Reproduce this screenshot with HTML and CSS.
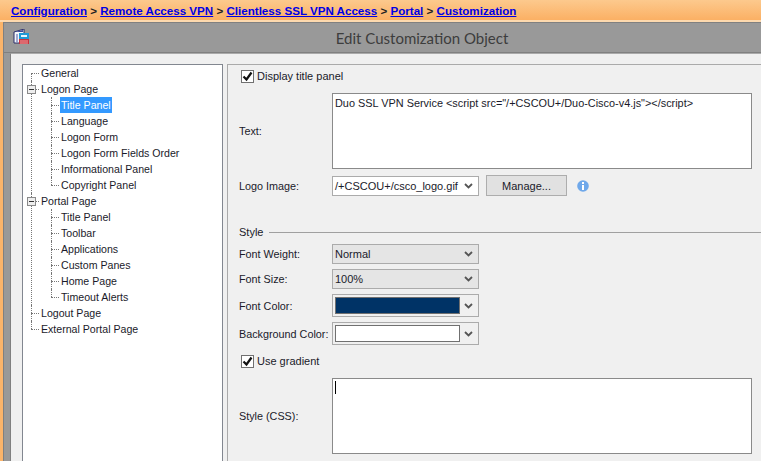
FILE: index.html
```html
<!DOCTYPE html>
<html lang="en">
<head>
    <meta charset="UTF-8">
    <title>Edit Customization Object</title>
    <link rel="stylesheet" href="styles.css">
</head>
<body>
    <div class="crumbs">
        <a href="#">Configuration</a> &gt; <a href="#">Remote Access VPN</a> &gt; <a href="#">Clientless SSL VPN Access</a> &gt; <a href="#">Portal</a> &gt; <a href="#">Customization</a>
    </div>
    <div class="window">
        <div class="titlebar">
            <svg class="winicon" width="16" height="16" viewBox="0 0 16 16">
                <path d="M1 3l10-3v14H1z" fill="#f4f6fb" stroke="#2b2f6b"/>
                <path d="M2 3l8-2v2H2z" fill="#3a4a9a"/>
                <path d="M3 6h2M3 8h2M3 10h2M3 12h2" stroke="#4a5aa8"/>
                <rect x="6" y="4" width="10" height="6" fill="#1f9ad6"/>
                <rect x="8" y="6" width="6" height="2" fill="#e8f6ff"/>
                <rect x="6" y="10" width="10" height="5" fill="#c8323c"/>
                <path d="M7 12h8M7 14h8" stroke="#f0a0a0"/>
            </svg>
            <span class="wintitle">Edit Customization Object</span>
        </div>
        <div class="content">
            <ul class="tree">
                <li><span class="node">General</span></li>
                <li class="open">
                    <span class="minus"></span><span class="node">Logon Page</span>
                    <ul>
                        <li><span class="node selected">Title Panel</span></li>
                        <li><span class="node">Language</span></li>
                        <li><span class="node">Logon Form</span></li>
                        <li><span class="node">Logon Form Fields Order</span></li>
                        <li><span class="node">Informational Panel</span></li>
                        <li><span class="node">Copyright Panel</span></li>
                    </ul>
                </li>
                <li class="open">
                    <span class="minus"></span><span class="node">Portal Page</span>
                    <ul>
                        <li><span class="node">Title Panel</span></li>
                        <li><span class="node">Toolbar</span></li>
                        <li><span class="node">Applications</span></li>
                        <li><span class="node">Custom Panes</span></li>
                        <li><span class="node">Home Page</span></li>
                        <li><span class="node">Timeout Alerts</span></li>
                    </ul>
                </li>
                <li><span class="node">Logout Page</span></li>
                <li><span class="node">External Portal Page</span></li>
            </ul>
            <div class="form">
                <div class="checkrow first">
                    <span class="checkbox"><svg width="11" height="11" viewBox="0 0 11 11"><path d="M1.500 5.500l3 3 5-7" fill="none" stroke="#111" stroke-width="2.200"/></svg></span>
                    <span>Display title panel</span>
                </div>
                <div class="field text-field">
                    <label>Text:</label>
                    <div class="textbox tall">Duo SSL VPN Service &lt;script src="/+CSCOU+/Duo-Cisco-v4.js"&gt;&lt;/script&gt;</div>
                </div>
                <div class="field logo-field">
                    <label>Logo Image:</label>
                    <div class="select white">
                        <span class="value">/+CSCOU+/csco_logo.gif</span>
                        <svg class="chev" width="9" height="6" viewBox="0 0 9 6"><path d="M1 1l3.500 3.500L8 1" fill="none" stroke="#555" stroke-width="1.800"/></svg>
                    </div>
                    <button class="btn">Manage...</button>
                    <svg class="info" width="12" height="12" viewBox="0 0 12 12">
                        <circle cx="6" cy="6" r="5.800" fill="#6fa8ea"/>
                        <rect x="5" y="2" width="2" height="2" fill="#fff"/>
                        <rect x="5" y="5" width="2" height="5" fill="#fff"/>
                    </svg>
                </div>
                <div class="section">
                    <span>Style</span>
                    <span class="rule"></span>
                </div>
                <div class="field weight-field">
                    <label>Font Weight:</label>
                    <div class="select">
                        <span class="value">Normal</span>
                        <svg class="chev" width="9" height="6" viewBox="0 0 9 6"><path d="M1 1l3.500 3.500L8 1" fill="none" stroke="#555" stroke-width="1.800"/></svg>
                    </div>
                </div>
                <div class="field size-field">
                    <label>Font Size:</label>
                    <div class="select">
                        <span class="value">100%</span>
                        <svg class="chev" width="9" height="6" viewBox="0 0 9 6"><path d="M1 1l3.500 3.500L8 1" fill="none" stroke="#555" stroke-width="1.800"/></svg>
                    </div>
                </div>
                <div class="field color-field">
                    <label>Font Color:</label>
                    <div class="select colorpick">
                        <span class="swatch navy"></span>
                        <svg class="chev" width="9" height="6" viewBox="0 0 9 6"><path d="M1 1l3.500 3.500L8 1" fill="none" stroke="#555" stroke-width="1.800"/></svg>
                    </div>
                </div>
                <div class="field color-field">
                    <label>Background Color:</label>
                    <div class="select colorpick">
                        <span class="swatch"></span>
                        <svg class="chev" width="9" height="6" viewBox="0 0 9 6"><path d="M1 1l3.500 3.500L8 1" fill="none" stroke="#555" stroke-width="1.800"/></svg>
                    </div>
                </div>
                <div class="checkrow second">
                    <span class="checkbox"><svg width="11" height="11" viewBox="0 0 11 11"><path d="M1.500 5.500l3 3 5-7" fill="none" stroke="#111" stroke-width="2.200"/></svg></span>
                    <span>Use gradient</span>
                </div>
                <div class="field css-field">
                    <label>Style (CSS):</label>
                    <div class="textbox tall"><span class="caret"></span></div>
                </div>
            </div>
        </div>
    </div>
</body>
</html>
```

FILE: styles.css
```css
*{
    margin: 0;
    padding: 0;
    box-sizing: border-box;
    font-family: "Liberation Sans", Arial, sans-serif;
}

html, body{
    height: 100%;
    overflow: hidden;
}

body{
    background-color: #fbb46a;
    font-size: 11px;
    color: #1a1a2a;
}

.crumbs{
    height: 22px;
    padding: 3px 0 0 11px;
    background-image: linear-gradient(#fcc98d, #fbb064);
    border-bottom: 2px solid #fdd9ae;
    font-size: 11.6px;
    font-weight: bold;
    line-height: 15px;
    color: #222;
}
.crumbs a{
    color: #0000e6;
}

.window{
    margin-left: 3px;
    height: 439px;
    background-color: #999;
    border-top: 1px solid #808080;
    border-left: 1px solid #808080;
    display: flex;
    flex-direction: column;
}

.titlebar{
    height: 30px;
    flex-shrink: 0;
    display: flex;
    align-items: center;
    justify-content: center;
    border-bottom: 1px solid #808080;
    position: relative;
}
.wintitle{
    font-family: Lato, sans-serif;
    font-size: 15px;
    color: #3d3d3d;
    margin-left: 79px;
}
.winicon{
    position: absolute;
    left: 9px;
    top: 6px;
}

.content{
    flex: 1;
    margin-left: 6px;
    background-color: #f0f0f0;
    border-left: 1px solid #808080;
    border-top: 1px solid #aaa;
    padding: 10px 0 0 11px;
    display: flex;
}

.tree{
    width: 201px;
    height: 400px;
    flex-shrink: 0;
    background-color: #fff;
    border: 1px solid #828790;
    border-bottom: 0;
    list-style: none;
    padding-left: 17px;
    font-size: 10.6px;
}
.tree ul{
    list-style: none;
    padding-left: 20px;
}
.tree li{
    position: relative;
}
.node{
    display: inline-block;
    height: 16px;
    line-height: 16px;
    padding: 0 1px;
    vertical-align: top;
}
.selected{
    background-color: #3399ff;
    color: #fff;
}

/* dotted tree connectors */
.tree li::before{
    content: "";
    position: absolute;
    left: -9px;
    top: 8px;
    width: 8px;
    border-top: 1px dotted #777;
}
.tree li::after{
    content: "";
    position: absolute;
    left: -9px;
    top: 0;
    bottom: 0;
    border-left: 1px dotted #777;
}
.tree li:last-child::after{
    bottom: auto;
    height: 8px;
}
.tree > li:first-child::after{
    top: 8px;
}
.minus{
    position: absolute;
    left: -13px;
    top: 4px;
    width: 9px;
    height: 9px;
    background-color: #eee;
    border: 1px solid #8a8a8a;
    z-index: 1;
}
.minus::after{
    content: "";
    position: absolute;
    left: 1px;
    top: 3px;
    width: 5px;
    height: 1px;
    background-color: #333;
}

.form{
    flex: 1;
    margin-left: 4px;
    height: 400px;
    border-left: 1px solid #aaa;
    border-top: 1px solid #aaa;
    padding-left: 11px;
}

.field{
    display: flex;
    align-items: center;
}
.field label{
    width: 93px;
    flex-shrink: 0;
    white-space: nowrap;
    font-size: 10.8px;
}

.checkrow{
    display: flex;
    align-items: center;
    height: 16px;
    padding-left: 2px;
}
.first{
    margin-top: 3px;
}
.second{
    margin-top: 8px;
}
.checkbox{
    width: 13px;
    height: 13px;
    margin-right: 3px;
    background-color: #fff;
    border: 1px solid #707070;
    display: flex;
    align-items: center;
    justify-content: center;
}

.textbox{
    width: 420px;
    background-color: #fff;
    border: 1px solid #8a8a8a;
    padding: 3px 2px;
    font-size: 10.9px;
}
.tall{
    height: 76px;
}
.text-field{
    margin-top: 9px;
}
.css-field{
    margin-top: 9px;
}
.caret{
    display: block;
    width: 1px;
    height: 13px;
    margin-top: -1px;
    background-color: #000;
}

.select{
    width: 147px;
    height: 20px;
    background-color: #e5e5e5;
    border: 1px solid #ababab;
    display: flex;
    align-items: center;
    justify-content: space-between;
    padding: 0 5px 0 2px;
}
.select.white{
    background-color: #fff;
}
.value{
    white-space: nowrap;
}
.logo-field{
    margin-top: 6px;
}
.weight-field{
    margin-top: 4px;
}
.size-field{
    margin-top: 5px;
}
.color-field{
    margin-top: 5px;
}
.colorpick{
    height: 23px;
    background-color: #f0f0f0;
}
.swatch{
    width: 125px;
    height: 17px;
    background-color: #fff;
    border: 1px solid #707070;
}
.navy{
    background-color: #003366;
}

.btn{
    width: 81px;
    height: 21px;
    margin-left: 7px;
    background-color: #e1e1e1;
    border: 1px solid #adadad;
    font-size: 11px;
    color: #1a1a2a;
}
.info{
    margin-left: 10px;
}

.section{
    margin-top: 28px;
    height: 16px;
    display: flex;
    align-items: center;
}
.rule{
    flex: 1;
    height: 1px;
    margin-left: 6px;
    background-color: #a0a0a0;
}
```
